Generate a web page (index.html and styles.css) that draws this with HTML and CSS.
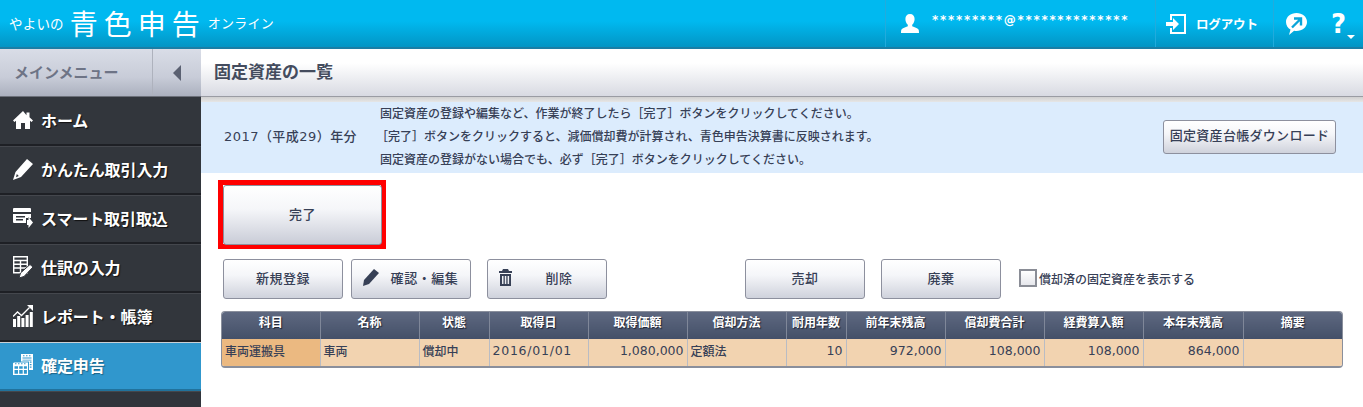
FILE: index.html
```html
<!DOCTYPE html>
<html lang="ja">
<head>
<meta charset="utf-8">
<title>固定資産の一覧</title>
<link rel="stylesheet" href="styles.css">
</head>
<body>
<header class="topbar">
  <div class="logo"><span class="logo-s">やよいの</span><span class="logo-l">青色申告</span><span class="logo-t">オンライン</span></div>
  <div class="top-cell user">
    <svg class="ico-user" width="18" height="20" viewBox="0 0 18 20"><path fill="#fff" d="M9 0c3 0 4.600 2 4.600 5 0 2.400-1 4.600-2.400 5.800v1.500c2.400.8 5.300 1.800 6.300 3.200.4.600.5 2 .5 3.500H0c0-1.500.1-2.900.5-3.500 1-1.400 3.900-2.400 6.300-3.200v-1.500C5.400 9.600 4.400 7.400 4.400 5 4.400 2 6 0 9 0z"/></svg>
    <span class="mail">*********@**************</span>
  </div>
  <div class="top-cell logout">
    <svg width="20" height="20" viewBox="0 0 20 20"><path fill="none" stroke="#fff" stroke-width="2" d="M5 6V1h14v18H5v-5"/><path fill="#fff" d="M0 8h7V4l6 6-6 6v-4H0z"/></svg>
    <span class="logout-text">ログアウト</span>
  </div>
  <div class="top-cell help">
    <svg width="21" height="22" viewBox="0 0 21 22"><path fill="#fff" d="M10.500 0c5.800 0 10.500 3.800 10.500 9s-4.700 9-10.500 9c-.8 0-1.600-.1-2.400-.2L3 22l1.500-5.500C1.800 15 0 12.200 0 9 0 3.800 4.700 0 10.500 0z"/><path fill="none" stroke="#0aa5d9" stroke-width="2.400" d="M6 14.500 14 6.500M8 5.500h7v7"/></svg>
    <div class="qmark">?<i class="caret"></i></div>
  </div>
</header>
<div class="layout">
  <nav class="side">
    <div class="side-head"><span class="side-title">メインメニュー</span><span class="side-toggle"><i class="tri-left"></i></span></div>
    <a class="item">
      <svg width="20" height="20" viewBox="0 0 20 20"><path fill="#fff" d="M10 1 0 10.500l1.500 1.500L3 10.700V19h5v-6h4v6h5v-8.300l1.500 1.300 1.500-1.500-3.500-3.300V2.500h-3v2.700z"/></svg>
      <span>ホーム</span></a>
    <a class="item">
      <svg width="20" height="22" viewBox="0 0 20 22"><path fill="#fff" fill-rule="evenodd" d="M14 1l6 5L8 19 0 22l2.500-8zM3.800 16 3 19.300l2.800-1.200z"/></svg>
      <span>かんたん取引入力</span></a>
    <a class="item">
      <svg width="20" height="20" viewBox="0 0 20 20"><path fill="#fff" fill-rule="evenodd" d="M1 0h16a1 1 0 0 1 1 1v3H0V1a1 1 0 0 1 1-1zM0 6h18v4h-5v5H1a1 1 0 0 1-1-1zM3 8v1.500h9V8zM3 11v1.500h7V11zM14 12h1.500V9l4.500 5.500L15.500 20v-3H14z"/></svg>
      <span>スマート取引取込</span></a>
    <a class="item">
      <svg width="20" height="22" viewBox="0 0 20 22"><path fill="none" stroke="#fff" stroke-width="1.400" d="M.7.7h13.600v16H.7zM.7 4.500h13.600M.7 8.200h13.600M.7 12h13.600M7.500 4.500v12"/><path fill="#fff" fill-rule="evenodd" stroke="#32363c" d="M17 8.500l3 2.500-9 9.500-5 1.500 1.500-5z"/></svg>
      <span>仕訳の入力</span></a>
    <a class="item">
      <svg width="20" height="22" viewBox="0 0 20 22"><path fill="#fff" d="M0 14h3v8H0zM4.200 11h3v11h-3zM8.400 13h3v9h-3zM12.600 10h3v12h-3zM16.800 7h3v15h-3z"/><path fill="none" stroke="#fff" stroke-width="1.300" d="M0 11.500 4.500 7l4 3.500L16.500 2.500"/><path fill="#fff" d="M14 0h6v6z"/></svg>
      <span>レポート・帳簿</span></a>
    <a class="item active">
      <svg width="20" height="21" viewBox="0 0 20 25" preserveAspectRatio="none"><path fill="#fff" fill-rule="evenodd" d="M8 0h12v19h-4V9H8zM10 1.500v1.200h1.500V1.500zM13 1.500v1.200h1.500V1.500zM16 1.500v1.200h1.500V1.500zM9.500 4.200v1.300h9V4.200zM9.500 6.700v1h9v-1zM16.800 9v1.500h1.700V9zM16.800 12v1.500h1.700V12zM16.800 15v1.500h1.700V15z"/><path fill="#fff" fill-rule="evenodd" d="M1 10h14v15H0V11zM2 11v1.200h1.500V11zM5 11v1.200h1.500V11zM8 11v1.200h1.500V11zM11 11v1.200h1.500V11zM1.500 14.500v3h3.500v-3zM6.200 14.500v3h3.500v-3zM10.900 14.500v3h3v-3zM1.500 19v4.500h3.500V19zM6.200 19v4.500h3.500V19zM10.900 19v4.500h3V19z"/></svg>
      <span>確定申告</span></a>
    <div class="rest"></div>
  </nav>
  <main class="main">
    <div class="title-bar"><h1>固定資産の一覧</h1></div>
    <div class="title-shadow"></div>
    <section class="info">
      <div class="year">2017（平成29）年分</div>
      <div class="notes">
        <p>固定資産の登録や編集など、作業が終了したら［完了］ボタンをクリックしてください。</p>
        <p class="hang">［完了］ボタンをクリックすると、減価償却費が計算され、青色申告決算書に反映されます。</p>
        <p>固定資産の登録がない場合でも、必ず［完了］ボタンをクリックしてください。</p>
      </div>
      <button class="btn dl">固定資産台帳ダウンロード</button>
    </section>
    <div class="done-wrap"><button class="btn done">完了</button></div>
    <div class="actions">
      <button class="btn act">新規登録</button>
      <button class="btn act ico">
        <svg width="16" height="17" viewBox="0 0 16 17"><path fill="#374056" d="M11 0l5 4L6 15l-6 2 1-6z"/></svg>
        <span>確認・編集</span></button>
      <button class="btn act ico third">
        <svg width="13" height="17" viewBox="0 0 13 17"><path fill="#374056" d="M4 0h5l1 2h3v2H0V2h3zM1 5h11v12H1zM3 7v8h1.500V7zM5.800 7v8h1.500V7zM8.600 7v8h1.500V7z" fill-rule="evenodd"/></svg>
        <span>削除</span></button>
      <button class="btn act sell">売却</button>
      <button class="btn act">廃棄</button>
      <label class="chk"><i class="box"></i>償却済の固定資産を表示する</label>
    </div>
    <div class="table-wrap">
    <table class="grid">
      <colgroup><col class="c98"><col class="c99"><col class="c70"><col class="c99"><col class="c99"><col class="c99"><col class="c60"><col class="c99"><col class="c99"><col class="c99"><col class="c100"><col></colgroup>
      <thead><tr><th>科目</th><th>名称</th><th>状態</th><th>取得日</th><th>取得価額</th><th>償却方法</th><th>耐用年数</th><th>前年末残高</th><th>償却費合計</th><th>経費算入額</th><th>本年末残高</th><th>摘要</th></tr></thead>
      <tbody><tr><td class="cat">車両運搬具</td><td>車両</td><td>償却中</td><td class="digits">2016/01/01</td><td class="num">1,080,000</td><td>定額法</td><td class="num">10</td><td class="num">972,000</td><td class="num">108,000</td><td class="num">108,000</td><td class="num">864,000</td><td></td></tr></tbody>
    </table>
    </div>
  </main>
</div>
</body>
</html>
```
FILE: styles.css
```css
* { box-sizing: border-box; }
html, body { margin: 0; height: 100%; }
body { width: 1363px; height: 407px; overflow: hidden; background: #fff; font-family: "DejaVu Sans", "Noto Sans CJK JP", sans-serif; font-size: 12px; color: #374056; }
.topbar { height: 49px; display: flex; align-items: stretch; background: linear-gradient(#00b9f0 0, #00b9f0 45%, #0395c4 100%); border-bottom: 2px solid #1b7ea5; color: #fff; }
.logo { display: flex; align-items: center; margin-left: 9px; width: 876px; font-family: "Noto Sans CJK JP", sans-serif; font-weight: 400; white-space: nowrap; }
.logo-s { font-size: 13.500px; letter-spacing: .2px; margin-top: -1px; }
.logo-l { font-size: 28px; letter-spacing: 6px; margin-left: 6px; line-height: 1; margin-top: -2px; }
.logo-t { font-size: 13px; letter-spacing: .2px; margin-left: 2px; margin-top: -2px; }
.top-cell { display: flex; align-items: center; border-left: 1px solid #22abdc; height: 47px; }
.user { width: 270px; padding-left: 15px; }
.mail { margin-left: 13px; font-size: 12px; font-family: "DejaVu Sans", sans-serif; letter-spacing: 1.700px; font-weight: 700; margin-top: -7px; white-space: nowrap; }
.logout { width: 118px; padding-left: 10px; }
.logout-text { margin-left: 10px; font: 700 12.500px "Noto Sans CJK JP", sans-serif; letter-spacing: -.15px; }
.help { flex: 1; padding-left: 12px; position: relative; }
.qmark { margin-left: 24px; font: 700 26px/1 "DejaVu Sans", sans-serif; }
.caret { position: absolute; right: 8px; bottom: 8px; width: 0; height: 0; border: 4px solid transparent; border-top-color: #fff; border-bottom: 0; }

.layout { display: flex; height: 358px; }
.side { width: 201px; background: #30343b; flex: none; display: flex; flex-direction: column; }
.side-head { height: 48px; display: flex; background: linear-gradient(#d9dde7, #c8ccd8 60%, #abb0be); border-bottom: 1px solid #6c7079; }
.side-title { width: 153px; border-right: 1px solid #aeb2bd; padding-left: 14px; font: 700 15px/46px "Noto Sans CJK JP", sans-serif; color: #6e7486; }
.side-toggle { flex: 1; display: flex; align-items: center; justify-content: center; }
.tri-left { width: 0; height: 0; border: 8px solid transparent; border-right: 8px solid #5b6172; border-left: 0; }
.item { height: 49px; display: flex; align-items: center; padding: 0 0 3px 13px; gap: 8px; background: #32363c; border-bottom: 2px solid #1e2025; border-top: 1px solid #44474d; color: #fff; font: 700 16px "Noto Sans CJK JP", sans-serif; letter-spacing: -.1px; text-shadow: 1px 1px 1px #111; }
.item svg { flex: none; }
.item:first-of-type { border-top: 0; padding-bottom: 2px; }
.active { background: #3097cd; border-top-color: #c9d0d6; border-bottom-color: #21729c; text-shadow: 1px 1px 1px #1c6488; }
.rest { flex: 1; border-top: 1px solid #44474d; }

.main { flex: 1; display: flex; flex-direction: column; min-width: 0; }
.title-bar { height: 48px; flex: none; background: linear-gradient(#fff, #fff 30%, #d8dae2); border-bottom: 1px solid #9a9ca3; display: flex; align-items: center; padding-left: 13px; }
.title-bar h1 { margin: 0 0 4px; font: 700 17px "Noto Sans CJK JP", sans-serif; color: #444c5e; }
.title-shadow { height: 5px; flex: none; background: linear-gradient(#d0d0d0, #e6e6e6); }
.info { height: 71px; flex: none; background: #dcecfd; display: flex; align-items: center; padding: 0 27px 2px 23px; font-family: "Noto Sans CJK JP", sans-serif; font-size: 12px; font-weight: 500; }
.year { width: 156px; font-size: 13px; font-weight: 500; font-family: "DejaVu Sans", "Noto Sans CJK JP", sans-serif; margin-bottom: 2px; letter-spacing: .45px; }
.notes p { margin: 0; line-height: 23px; }
.notes { flex: 1; margin-bottom: 2px; }
.notes .hang { text-indent: -4px; }
.btn { border: 1px solid #8d909e; border-radius: 3px; background: linear-gradient(#fff, #f5f6f9 40%, #cfd2dc); color: #374056; font: 500 13px "Noto Sans CJK JP", sans-serif; padding: 0 0 4px; letter-spacing: .55px; }
.dl { width: 173px; height: 34px; font-size: 13px; letter-spacing: .3px; }
.done-wrap { margin: 7px 0 0 17px; width: 168px; height: 69px; border: 5px solid #f00; flex: none; }
.done { width: 159px; height: 60px; display: block; background: linear-gradient(#fff, #f5f6f9 40%, #c9ccd7); }
.actions { display: flex; align-items: center; margin: 10px 0 0 22px; height: 40px; flex: none; }
.act { width: 120px; height: 40px; margin-right: 8px; }
.ico { display: flex; align-items: center; padding-left: 11px; }
.ico span { flex: 1; }
.ico svg { flex: none; }
.third { margin-left: 8px; }
.sell { margin-left: 130px; margin-right: 16px; }
.chk { display: flex; align-items: center; margin: -2px 0 0 10px; font: 500 12px "Noto Sans CJK JP", sans-serif; }
.box { width: 18px; height: 18px; border: 2px solid #8a8d96; background: linear-gradient(#fff, #e6e7ec); margin-right: 2px; }
.table-wrap { margin: 12px 0 0 20px; width: 1122px; border: 1px solid #8a8f9c; border-bottom-width: 2px; border-radius: 4px; overflow: hidden; flex: none; }
.grid { width: 100%; border-collapse: collapse; table-layout: fixed; }
.c98 { width: 98px; }
.c99 { width: 99px; }
.c100 { width: 100px; }
.c70 { width: 70px; }
.c60 { width: 60px; }
.grid th { height: 27px; padding: 0 0 8px; background: linear-gradient(#5e6880, #445068); border-right: 1px solid #7f8799; color: #fff; font: 700 12px "Noto Sans CJK JP", sans-serif; text-shadow: 1px 1px 1px #1c2233; white-space: nowrap; }
.grid th:last-child, .grid td:last-child { border-right: 0; }
.grid td { height: 27px; padding: 0 3px 4px; background: #f2d3b0; border-right: 1px solid #b9bcc4; font-size: 12px; font-weight: 500; color: #374056; white-space: nowrap; }
.grid td.cat { background: #ebb981; }
.grid td.num, .grid td.digits { font-size: 12.500px; }
.grid td.digits { letter-spacing: .75px; }
.grid td.num { text-align: right; }
```
